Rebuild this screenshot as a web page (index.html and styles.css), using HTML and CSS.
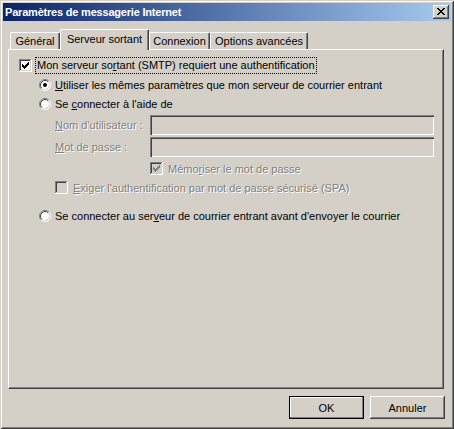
FILE: index.html
```html
<!DOCTYPE html>
<html lang="fr">
<head>
<meta charset="utf-8">
<title>Paramètres de messagerie Internet</title>
<link rel="stylesheet" href="styles.css">
</head>
<body>
<div class="window">
  <div class="titlebar">
    <span class="title">Paramètres de messagerie Internet</span>
    <div class="close">
      <svg width="16" height="14" viewBox="0 0 16 14" shape-rendering="crispEdges">
        <g fill="#000" transform="translate(4 3)">
          <rect x="0" y="0" width="2" height="1"/><rect x="6" y="0" width="2" height="1"/>
          <rect x="1" y="1" width="2" height="1"/><rect x="5" y="1" width="2" height="1"/>
          <rect x="2" y="2" width="4" height="1"/>
          <rect x="3" y="3" width="2" height="1"/>
          <rect x="2" y="4" width="4" height="1"/>
          <rect x="1" y="5" width="2" height="1"/><rect x="5" y="5" width="2" height="1"/>
          <rect x="0" y="6" width="2" height="1"/><rect x="6" y="6" width="2" height="1"/>
        </g>
      </svg>
    </div>
  </div>
  <div class="client">
    <div class="tabs">
      <div class="tab tab-general">Général</div>
      <div class="tab tab-serveur selected">Serveur sortant</div>
      <div class="tab tab-connexion">Connexion</div>
      <div class="tab tab-options">Options avancées</div>
    </div>
    <div class="panel">
      <div class="row">
        <svg class="cb" width="13" height="13" viewBox="0 0 13 13" shape-rendering="crispEdges">
          <rect width="13" height="13" fill="#fff"/>
          <rect width="12" height="1" fill="#808080"/><rect width="1" height="12" fill="#808080"/>
          <rect x="1" y="1" width="10" height="1" fill="#404040"/><rect x="1" y="1" width="1" height="10" fill="#404040"/>
          <rect x="1" y="11" width="11" height="1" fill="#d4d0c8"/><rect x="11" y="1" width="1" height="11" fill="#d4d0c8"/>
          <rect x="2" y="2" width="9" height="9" fill="#fff"/>
          <path d="M3 5H4V6H5V7H6V6H7V5H8V4H9V3H10V6H9V7H8V8H7V9H6V10H5V9H4V8H3Z" fill="#000"/>
        </svg>
        <span class="label focus">Mon serveur so<u>r</u>tant (SMTP) requiert une authentification</span>
      </div>
      <div class="row indent-radio">
        <svg class="rb" width="12" height="12" viewBox="0 0 12 12">
          <circle cx="6" cy="6" r="5" fill="#fff"/>
          <path d="M2.11 9.89A5.5 5.5 0 0 1 9.89 2.11" fill="none" stroke="#808080"/>
          <path d="M9.89 2.11A5.5 5.5 0 0 1 2.11 9.89" fill="none" stroke="#fff"/>
          <path d="M2.82 9.18A4.5 4.5 0 0 1 9.18 2.82" fill="none" stroke="#404040"/>
          <path d="M9.18 2.82A4.5 4.5 0 0 1 2.82 9.18" fill="none" stroke="#d4d0c8"/>
          <circle cx="6" cy="6" r="2" fill="#000"/>
        </svg>
        <span class="label"><u>U</u>tiliser les mêmes paramètres que mon serveur de courrier entrant</span>
      </div>
      <div class="row indent-radio">
        <svg class="rb" width="12" height="12" viewBox="0 0 12 12">
          <circle cx="6" cy="6" r="5" fill="#fff"/>
          <path d="M2.11 9.89A5.5 5.5 0 0 1 9.89 2.11" fill="none" stroke="#808080"/>
          <path d="M9.89 2.11A5.5 5.5 0 0 1 2.11 9.89" fill="none" stroke="#fff"/>
          <path d="M2.82 9.18A4.5 4.5 0 0 1 9.18 2.82" fill="none" stroke="#404040"/>
          <path d="M9.18 2.82A4.5 4.5 0 0 1 2.82 9.18" fill="none" stroke="#d4d0c8"/>
        </svg>
        <span class="label">Se <u>c</u>onnecter à l'aide de</span>
      </div>
      <div class="field-row">
        <span class="field-label disabled"><u>N</u>om d'utilisateur :</span>
        <div class="field-input"></div>
      </div>
      <div class="field-row">
        <span class="field-label disabled"><u>M</u>ot de passe :</span>
        <div class="field-input"></div>
      </div>
      <div class="row indent-memo">
        <svg class="cb" width="13" height="13" viewBox="0 0 13 13" shape-rendering="crispEdges">
          <rect width="13" height="13" fill="#fff"/>
          <rect width="12" height="1" fill="#808080"/><rect width="1" height="12" fill="#808080"/>
          <rect x="1" y="1" width="10" height="1" fill="#404040"/><rect x="1" y="1" width="1" height="10" fill="#404040"/>
          <rect x="1" y="11" width="11" height="1" fill="#d4d0c8"/><rect x="11" y="1" width="1" height="11" fill="#d4d0c8"/>
          <rect x="2" y="2" width="9" height="9" fill="#d4d0c8"/>
          <path d="M3 5H4V6H5V7H6V6H7V5H8V4H9V3H10V6H9V7H8V8H7V9H6V10H5V9H4V8H3Z" fill="#808080"/>
        </svg>
        <span class="label disabled">Mémo<u>r</u>iser le mot de passe</span>
      </div>
      <div class="row indent-spa">
        <svg class="cb" width="13" height="13" viewBox="0 0 13 13" shape-rendering="crispEdges">
          <rect width="13" height="13" fill="#fff"/>
          <rect width="12" height="1" fill="#808080"/><rect width="1" height="12" fill="#808080"/>
          <rect x="1" y="1" width="10" height="1" fill="#404040"/><rect x="1" y="1" width="1" height="10" fill="#404040"/>
          <rect x="1" y="11" width="11" height="1" fill="#d4d0c8"/><rect x="11" y="1" width="1" height="11" fill="#d4d0c8"/>
          <rect x="2" y="2" width="9" height="9" fill="#d4d0c8"/>
        </svg>
        <span class="label disabled"><u>E</u>xiger l'authentification par mot de passe sécurisé (SPA)</span>
      </div>
      <div class="row indent-radio row-last">
        <svg class="rb" width="12" height="12" viewBox="0 0 12 12">
          <circle cx="6" cy="6" r="5" fill="#fff"/>
          <path d="M2.11 9.89A5.5 5.5 0 0 1 9.89 2.11" fill="none" stroke="#808080"/>
          <path d="M9.89 2.11A5.5 5.5 0 0 1 2.11 9.89" fill="none" stroke="#fff"/>
          <path d="M2.82 9.18A4.5 4.5 0 0 1 9.18 2.82" fill="none" stroke="#404040"/>
          <path d="M9.18 2.82A4.5 4.5 0 0 1 2.82 9.18" fill="none" stroke="#d4d0c8"/>
        </svg>
        <span class="label">Se connecter au ser<u>v</u>eur de courrier entrant avant d'envoyer le courrier</span>
      </div>
    </div>
    <div class="buttons">
      <div class="btn btn-default">OK</div>
      <div class="btn">Annuler</div>
    </div>
  </div>
</div>
</body>
</html>
```
FILE: styles.css
```css
html, body {
  margin: 0;
  padding: 0;
  background: #d4d0c8;
}
body {
  font-family: "Liberation Sans", Arial, sans-serif;
  font-size: 11px;
  color: #000;
}
.window {
  width: 454px;
  height: 429px;
  box-sizing: border-box;
  padding: 3px;
  background: #d4d0c8;
  box-shadow: inset 1px 1px #d4d0c8, inset -1px -1px #404040, inset 2px 2px #fff, inset -2px -2px #808080;
}
.titlebar {
  height: 18px;
  display: flex;
  align-items: center;
  justify-content: space-between;
  padding: 0 2px 0 2px;
  background: linear-gradient(to right, #0a246a, #a6caf0);
}
.title {
  color: #fff;
  font-weight: bold;
  font-size: 11px;
  letter-spacing: -0.2px;
  white-space: nowrap;
}
.close {
  width: 16px;
  height: 14px;
  background: #d4d0c8;
  box-shadow: inset -1px -1px #404040, inset 1px 1px #fff, inset -2px -2px #808080;
}
.close svg { display: block; }
.client {
  padding: 8px 7px 0 5px;
}
.tabs {
  height: 20px;
  display: flex;
  align-items: flex-end;
  padding-left: 2px;
}
.tab {
  height: 17px;
  box-sizing: border-box;
  display: flex;
  align-items: center;
  justify-content: center;
  border-top: 1px solid #fff;
  border-left: 1px solid #fff;
  border-right: 1px solid #404040;
  box-shadow: inset -1px 0 #808080;
  border-radius: 2px 2px 0 0;
  white-space: nowrap;
  background: #d4d0c8;
}
.tab-general { width: 50px; }
.tab-serveur { width: 89px; }
.tab-connexion { width: 61px; }
.tab-options { width: 98px; }
.tab.selected {
  height: 21px;
  margin-bottom: -1px;
  padding-bottom: 3px;
  position: relative;
  z-index: 1;
}
.panel {
  height: 340px;
  box-sizing: border-box;
  border-top: 1px solid #fff;
  border-left: 1px solid #fff;
  border-right: 1px solid #404040;
  border-bottom: 1px solid #404040;
  box-shadow: inset -1px -1px #808080;
  padding: 6px 0 0 10px;
}
.row {
  height: 19px;
  display: flex;
  align-items: center;
  white-space: nowrap;
}
.cb, .rb { display: block; flex: none; }
.cb { margin-right: 5px; }
.rb { margin-right: 4px; }
.row .cb + .focus { margin-left: -1px; }
.focus {
  outline: 1px dotted #000;
  padding: 1px 1px 2px 1px;
}
.indent-radio { margin-left: 20px; }
.indent-memo { margin-left: 131px; margin-top: 2px; }
.indent-spa { margin-left: 36px; }
.row-last { margin-top: 9px; }
.field-row {
  height: 20px;
  margin-top: 2px;
  margin-left: 36px;
  display: flex;
  align-items: center;
}
.field-label {
  width: 95px;
  flex: none;
  white-space: nowrap;
}
.field-input {
  width: 284px;
  height: 20px;
  box-sizing: border-box;
  background: #d4d0c8;
  box-shadow: inset 1px 1px #808080, inset 2px 2px #404040, inset -1px -1px #fff, inset -2px -2px #d4d0c8;
}
.disabled {
  color: #808080;
  text-shadow: 1px 1px 0 #fff;
}
.buttons {
  margin-top: 7px;
  margin-right: -1px;
  display: flex;
  justify-content: flex-end;
  gap: 6px;
}
.btn {
  width: 75px;
  height: 23px;
  box-sizing: border-box;
  display: flex;
  align-items: center;
  justify-content: center;
  background: #d4d0c8;
  box-shadow: inset -1px -1px #404040, inset 1px 1px #fff, inset -2px -2px #808080;
}
.btn-default {
  border: 1px solid #000;
  box-shadow: inset -1px -1px #808080, inset 1px 1px #fff;
}
```
